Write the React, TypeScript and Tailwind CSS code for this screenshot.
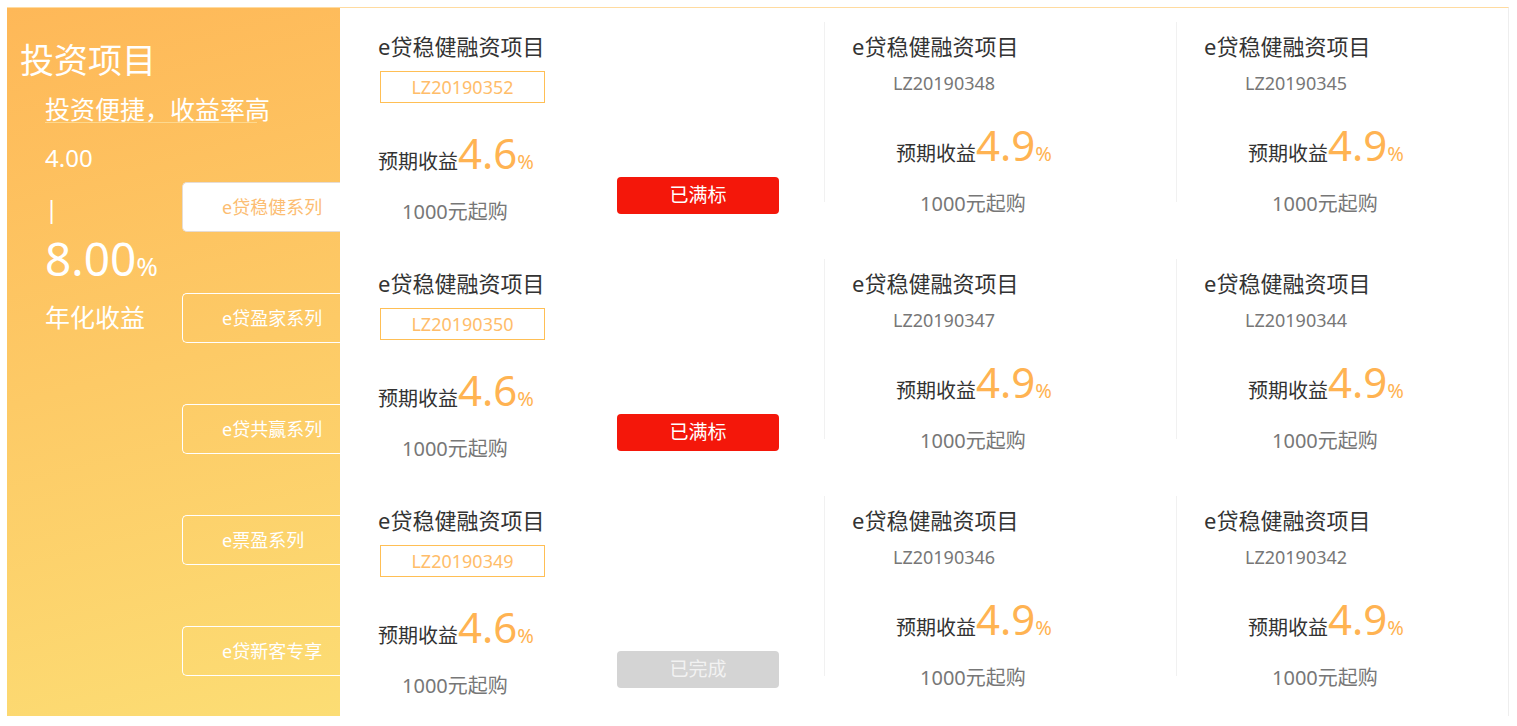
import React from 'react';

type Status = 'full' | 'done';

const rows: { code: string; status: Status; others: string[] }[] = [
  { code: 'LZ20190352', status: 'full', others: ['LZ20190348', 'LZ20190345'] },
  { code: 'LZ20190350', status: 'full', others: ['LZ20190347', 'LZ20190344'] },
  { code: 'LZ20190349', status: 'done', others: ['LZ20190346', 'LZ20190342'] },
];

const series = ['e贷稳健系列', 'e贷盈家系列', 'e贷共赢系列', 'e票盈系列', 'e贷新客专享'];

const Rate: React.FC<{ value: string }> = ({ value }) => (
  <div className="flex items-baseline">
    <span className="text-[20px] leading-[20px] text-[#333]">预期收益</span>
    <span className="text-[42px] leading-[42px] text-[#ffb352]">{value}</span>
    <span className="text-[20px] leading-[20px] text-[#ffb352]">%</span>
  </div>
);

const MainCard: React.FC<{ code: string; status: Status }> = ({ code, status }) => (
  <div className="flex w-[484px] pl-[38px] pt-[23px]">
    <div className="w-[239px] flex flex-col">
      <div className="text-[22px] leading-[30px] text-[#333] whitespace-nowrap">e贷稳健融资项目</div>
      <div className="mt-[10px] ml-[2px] w-[165px] h-[32px] border border-[#ffbf55] flex items-center justify-center text-[18px] text-[#ffbd6a]">
        {code}
      </div>
      <div className="mt-[29px]">
        <Rate value="4.6" />
      </div>
      <div className="mt-[24px] ml-[24px] text-[20px] leading-[28px] text-[#777] whitespace-nowrap">1000元起购</div>
    </div>
    {status === 'full' ? (
      <button className="mt-[146px] w-[162px] h-[37px] rounded-[4px] bg-[#f4170a] text-white text-[19px] leading-none">
        已满标
      </button>
    ) : (
      <button className="mt-[146px] w-[162px] h-[37px] rounded-[4px] bg-[#d4d4d4] text-[#f2f2f2] text-[19px] leading-none">
        已完成
      </button>
    )}
  </div>
);

const SmallCard: React.FC<{ code: string; wide?: boolean }> = ({ code, wide }) => (
  <div className={wide ? 'w-[352px]' : 'flex-1'}>
    <div className="mt-[14px] h-[180px] border-l border-[#f1f1f1] pl-[27px] pt-[9px] flex flex-col">
      <div className="text-[22px] leading-[30px] text-[#333] whitespace-nowrap">e贷稳健融资项目</div>
      <div className="mt-[10px] ml-[41px] text-[18px] leading-[24px] text-[#777]">{code}</div>
      <div className="mt-[29px] ml-[44px]">
        <Rate value="4.9" />
      </div>
      <div className="mt-[24px] ml-[68px] text-[20px] leading-[28px] text-[#777] whitespace-nowrap">1000元起购</div>
    </div>
  </div>
);

export default function App() {
  return (
    <div className="bg-white min-h-screen pt-[7px] pl-[7px] font-['Noto_Sans','Noto_Sans_CJK_SC',sans-serif]">
      <div className="w-[1502px] h-[709px] flex border-t border-t-[#ffdba0] border-r border-r-[#eeeeee]">
        {/* left panel */}
        <div className="w-[333px] h-[708px] bg-[linear-gradient(165deg,#feb858_0%,#fdca66_50%,#fcdd74_100%)] text-white overflow-hidden">
          <div className="pt-[30px] pl-[13px] text-[34px] leading-[44px]">投资项目</div>
          <div className="mt-[14px] ml-[38px] w-[212px] h-[27px] border-b border-[#fdd98f] text-[25px] leading-[27px] whitespace-nowrap">
            投资便捷，收益率高
          </div>
          <div className="flex">
            <div className="w-[175px] pl-[38px] flex flex-col">
              <div className="mt-[20px] text-[24px] leading-[30px]">4.00</div>
              <div className="mt-[21px] text-[24px] leading-[30px]">|</div>
              <div className="mt-[11px] flex items-baseline">
                <span className="text-[46px] leading-[46px]">8.00</span>
                <span className="text-[26px] leading-[26px]">%</span>
              </div>
              <div className="mt-[20px] text-[25px] leading-[32px] whitespace-nowrap">年化收益</div>
            </div>
            <div className="flex-1 mt-[59px] flex flex-col gap-[61px]">
              {series.map((s, i) => (
                <div
                  key={s}
                  className={
                    i === 0
                      ? 'h-[50px] rounded-l-[5px] border border-r-0 border-[#e6dcd4] bg-white pl-[39px] flex items-center text-[18px] text-[#fcbd72] whitespace-nowrap'
                      : 'h-[50px] rounded-l-[5px] border border-r-0 border-white pl-[39px] flex items-center text-[18px] text-white whitespace-nowrap'
                  }
                >
                  {s}
                </div>
              ))}
            </div>
          </div>
        </div>

        {/* product grid */}
        <div className="flex-1 flex flex-col">
          {rows.map((r) => (
            <div key={r.code} className="h-[237px] flex shrink-0 last:h-[234px]">
              <MainCard code={r.code} status={r.status} />
              <SmallCard code={r.others[0]} wide />
              <SmallCard code={r.others[1]} />
            </div>
          ))}
        </div>
      </div>
    </div>
  );
}
